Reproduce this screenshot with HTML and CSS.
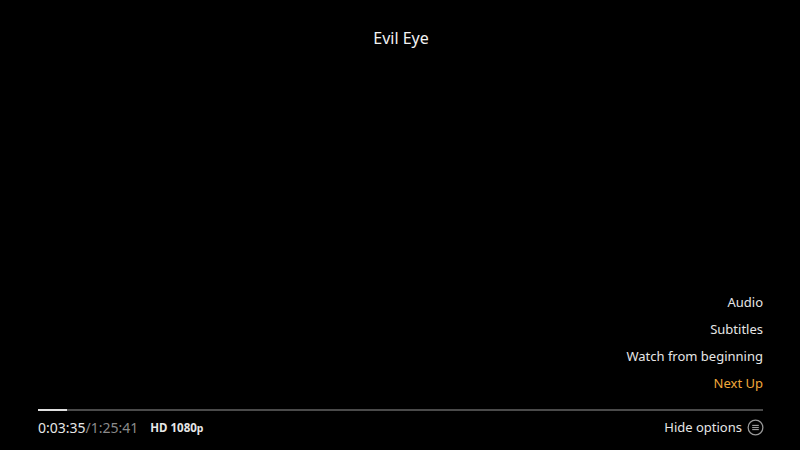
FILE: index.html
```html
<!DOCTYPE html>
<html>
<head>
<meta charset="utf-8">
<link rel="stylesheet" href="styles.css">
</head>
<body>
<div class="screen">
  <div class="title">Evil Eye</div>
  <div class="spacer"></div>
  <ul class="menu">
    <li>Audio</li>
    <li>Subtitles</li>
    <li>Watch from beginning</li>
    <li class="active">Next Up</li>
  </ul>
  <div class="progress"><div class="fill" style="width:4%"></div></div>
  <div class="bottom">
    <div class="time"><span class="cur">0:03:35</span><span class="total">/1:25:41</span></div>
    <div class="quality">HD 1080<span class="p">p</span></div>
    <div class="grow"></div>
    <div class="hide">Hide options
      <svg class="icon" width="17" height="17" viewBox="0 0 18 18">
        <circle cx="9" cy="9" r="7.8" fill="none" stroke="#9a9a9a" stroke-width="1.3"/>
        <line x1="5.5" y1="6.8" x2="12.5" y2="6.8" stroke="#9a9a9a" stroke-width="1.2"/>
        <line x1="5.5" y1="9" x2="12.5" y2="9" stroke="#9a9a9a" stroke-width="1.2"/>
        <line x1="5.5" y1="11.2" x2="12.5" y2="11.2" stroke="#9a9a9a" stroke-width="1.2"/>
      </svg>
    </div>
  </div>
</div>
</body>
</html>
```
FILE: styles.css
```css
html, body {
  margin: 0;
  padding: 0;
  background: #000;
}
body {
  font-family: "Noto Sans", "Open Sans", sans-serif;
  color: #e8e8e8;
}
.screen {
  width: 800px;
  height: 450px;
  box-sizing: border-box;
  padding: 26px 36px 0 38px;
  display: flex;
  flex-direction: column;
}
.title {
  text-align: center;
  font-size: 16px;
  line-height: 24px;
  color: #f2f2f2;
}
.spacer {
  flex: 1;
}
.menu {
  list-style: none;
  margin: 0 1px 0 0;
  padding: 0;
  display: flex;
  flex-direction: column;
  align-items: flex-end;
  gap: 9px;
  font-size: 13px;
  line-height: 18px;
}
.menu li {
  color: #e6e6e6;
}
.menu .active {
  color: #f0a83a;
}
.progress {
  margin: 17px 1px 0 0;
  height: 2px;
  background: #4a4a4a;
}
.fill {
  height: 100%;
  background: #e0e0e0;
}
.bottom {
  display: flex;
  align-items: center;
  height: 32px;
  margin-bottom: 7px;
  font-size: 14px;
}
.time .cur {
  color: #e6e6e6;
}
.time .total {
  color: #8a8a8a;
}
.quality {
  margin-left: 12px;
  font-weight: bold;
  font-size: 11.5px;
  color: #e6e6e6;
}
.quality .p {
  font-size: 10.5px;
}
.grow {
  flex: 1;
}
.hide {
  display: flex;
  align-items: center;
  gap: 5px;
  font-size: 13px;
  color: #e6e6e6;
}
.icon {
  display: block;
}
```
